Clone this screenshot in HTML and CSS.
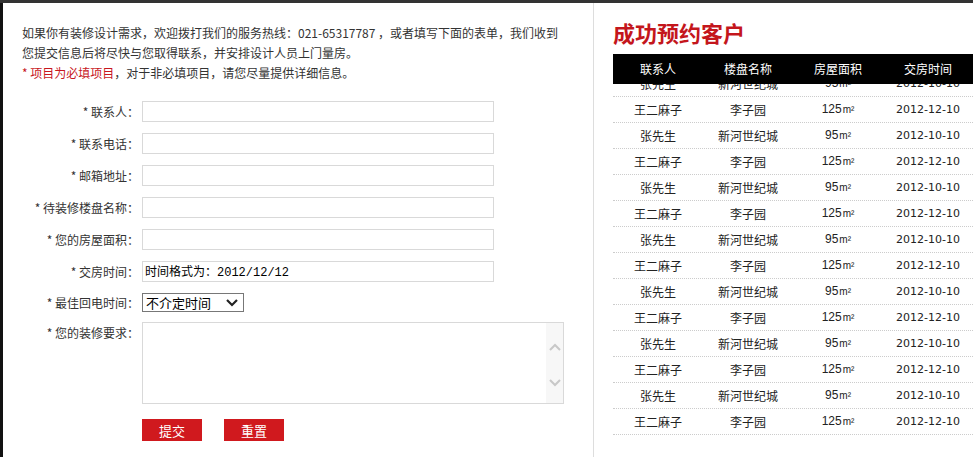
FILE: index.html
```html
<!DOCTYPE html>
<html lang="zh-CN">
<head>
    <meta charset="UTF-8">
    <title>在线预约</title>
    <link rel="stylesheet" href="styles.css">
</head>
<body>
    <div class="topbar"></div>
    <div class="page">
        <div class="main">
            <p class="intro">如果你有装修设计需求，欢迎拨打我们的服务热线：021-65317787 ，或者填写下面的表单，我们收到<br>您提交信息后将尽快与您取得联系，并安排设计人员上门量房。<br><span class="req">* 项目为必填项目</span>，对于非必填项目，请您尽量提供详细信息。</p>

            <form class="book-form">
                <div class="row"><label>* 联系人：</label><input type="text"></div>
                <div class="row"><label>* 联系电话：</label><input type="text"></div>
                <div class="row"><label>* 邮箱地址：</label><input type="text"></div>
                <div class="row"><label>* 待装修楼盘名称：</label><input type="text"></div>
                <div class="row"><label>* 您的房屋面积：</label><input type="text"></div>
                <div class="row"><label>* 交房时间：</label><input type="text" class="hint" value="时间格式为：2012/12/12"></div>
                <div class="row row-select">
                    <label>* 最佳回电时间：</label>
                    <span class="select-wrap">
                        <select><option>不介定时间</option></select>
                        <svg class="chev" width="14" height="10" viewBox="0 0 14 10"><path d="M2 2 L7 7 L12 2" fill="none" stroke="#222" stroke-width="2.2"/></svg>
                    </span>
                </div>
                <div class="row row-area">
                    <label>* 您的装修要求：</label>
                    <div class="area">
                        <textarea></textarea>
                        <div class="scroll">
                            <svg width="12" height="8" viewBox="0 0 12 8"><path d="M1 7 L6 2 L11 7" fill="none" stroke="#c8c8c8" stroke-width="2"/></svg>
                            <svg width="12" height="8" viewBox="0 0 12 8"><path d="M1 1 L6 6 L11 1" fill="none" stroke="#c8c8c8" stroke-width="2"/></svg>
                        </div>
                    </div>
                </div>
                <div class="actions">
                    <button type="button">提交</button>
                    <button type="reset">重置</button>
                </div>
            </form>
        </div>

        <div class="side">
            <h2>成功预约客户</h2>
            <div class="list-head">
                <span>联系人</span><span>楼盘名称</span><span>房屋面积</span><span>交房时间</span>
            </div>
            <div class="list-clip">
                <ul class="list" id="list"></ul>
            </div>
        </div>
    </div>

    <script>
        // two sample customers, repeated to fill the scroller
        const customers = [
            { name: '张先生', estate: '新河世纪城', area: '95', date: '2012-10-10' },
            { name: '王二麻子', estate: '李子园', area: '125', date: '2012-12-10' }
        ];

        const list = document.getElementById('list');
        for (let i = 0; i < 14; i++) {
            const c = customers[i % 2];
            const li = document.createElement('li');
            li.innerHTML = `<span>${c.name}</span><span>${c.estate}</span>` +
                `<span class="num">${c.area}<small>m²</small></span><span class="date">${c.date}</span>`;
            list.appendChild(li);
        }
    </script>
</body>
</html>
```

FILE: styles.css
```css
* {
    box-sizing: border-box;
}

body {
    margin: 0;
    font-family: "Noto Sans CJK SC", sans-serif;
    font-size: 12px;
    color: #333;
    background: #fff;
}

.topbar {
    height: 3px;
    background: #333;
}

.page {
    display: flex;
    min-height: 454px;
    border-left: 3px solid #111;
}

/* left: booking form */
.main {
    width: 591px;
    padding: 20px 0 0 19px;
    border-right: 1px solid #ddd;
}

.intro {
    margin: 0 0 18px;
    line-height: 20px;
    white-space: nowrap;
}

.intro .req {
    color: #c8161d;
}

.row {
    display: flex;
    align-items: center;
    margin-bottom: 11px;
}

.row label {
    width: 117px;
    margin-right: 3px;
    text-align: right;
    line-height: 21px;
}

.row input {
    width: 352px;
    height: 21px;
    margin: 0;
    padding: 0 2px;
    border: 1px solid #d9d9d9;
    font-family: inherit;
    font-size: 12px;
    outline: none;
}

.row input.hint {
    padding-bottom: 2px;
    font-family: "Liberation Mono", "Noto Sans CJK SC", monospace;
    font-size: 12px;
    color: #000;
}

.row-select {
    margin-bottom: 10px;
}

.row-select label {
    line-height: 19px;
}

.select-wrap {
    position: relative;
    display: inline-block;
    height: 19px;
}

.select-wrap select {
    appearance: none;
    display: block;
    width: 102px;
    height: 19px;
    margin: 0;
    padding: 0 0 0 3px;
    border: 1px solid #777;
    border-radius: 0;
    background: #fff;
    font-family: "Noto Sans CJK SC", sans-serif;
    font-size: 13px;
    line-height: 17px;
    color: #000;
}

.select-wrap .chev {
    position: absolute;
    right: 5px;
    top: 5px;
}

.row-area {
    align-items: flex-start;
    margin-bottom: 15px;
}

.area {
    display: flex;
    width: 422px;
    height: 82px;
    border: 1px solid #d9d9d9;
}

.area textarea {
    flex: 1;
    margin: 0;
    border: none;
    resize: none;
    outline: none;
}

.scroll {
    display: flex;
    flex-direction: column;
    justify-content: space-between;
    align-items: center;
    width: 17px;
    padding: 20px 0 16px;
    background: #f7f7f7;
}

.actions {
    display: flex;
    gap: 22px;
    padding-left: 120px;
}

.actions button {
    width: 60px;
    height: 22px;
    padding: 0;
    border: none;
    background: #d0191e;
    color: #fff;
    font-family: inherit;
    font-size: 13px;
    cursor: pointer;
}

/* right: booked customers */
.side {
    flex: 1;
    padding: 14px 0 0 19px;
    overflow: hidden;
}

.side h2 {
    margin: 0 0 7px;
    font-size: 22px;
    line-height: 30px;
    font-weight: bold;
    color: #c4161c;
}

.list-head,
.list li {
    display: grid;
    grid-template-columns: repeat(4, 90px);
    text-align: center;
}

.list-head {
    position: relative;
    z-index: 1;
    height: 30px;
    line-height: 30px;
    background: #000;
    color: #fff;
}

.list-clip {
    overflow: hidden;
}

.list {
    margin: -13px 0 0;
    padding: 0;
    list-style: none;
}

.list li {
    height: 26px;
    line-height: 25px;
    border-bottom: 1px dotted #ccc;
    color: #222;
}

.list .num {
    font-family: "Liberation Sans", Arial, sans-serif;
    font-size: 12px;
}

.list .num small {
    font-size: 10px;
    margin-left: 1px;
}

.list .date {
    font-family: "DejaVu Sans", Verdana, sans-serif;
    font-size: 11px;
}
```
